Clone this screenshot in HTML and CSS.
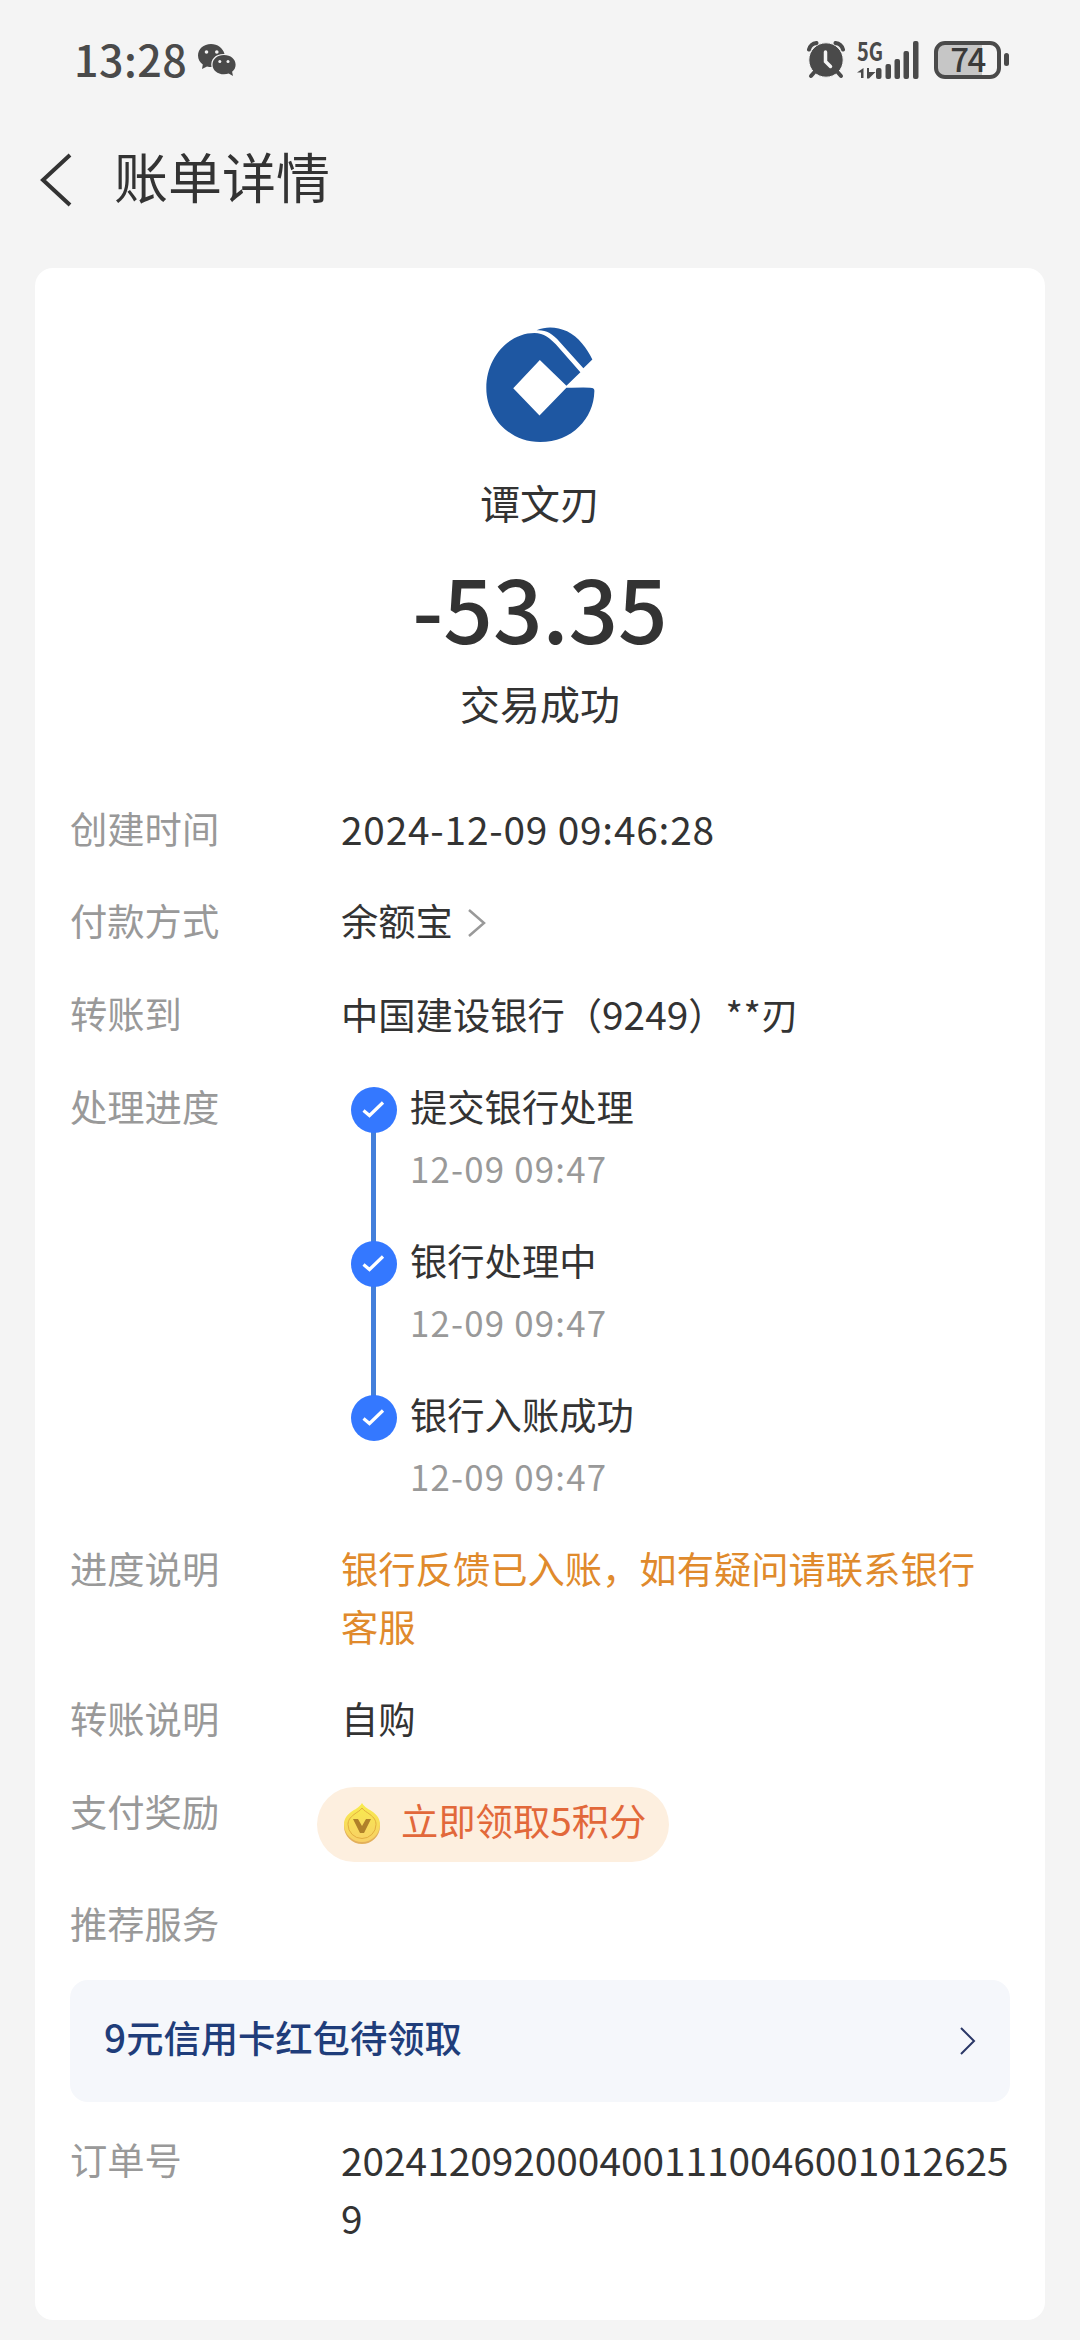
FILE: index.html
```html
<!DOCTYPE html>
<html lang="zh-CN">
<head>
    <meta charset="UTF-8">
    <meta name="viewport" content="width=device-width, initial-scale=1.0">
    <title>账单详情</title>
    <link rel="stylesheet" href="styles.css">
</head>
<body>
    <!-- Status bar -->
    <div class="status-bar">
        <span class="clock">13:28</span>
        <svg class="wechat" viewBox="0 0 38 33">
            <path d="M13 0C5.500 0 0 5 0 11.500c0 4 2 7 4.800 9L4 25l5-2.500c1.500.4 3 .5 4.500.5C12 15 18 9.500 26.500 10 25 4 19.500 0 13 0z"/>
            <path d="M26 11c-6.600 0-11.500 4.200-11.500 9.700S19.400 30.300 26 30.300c1.700 0 3.300-.3 4.700-.8L35 32l-.9-4.300c2.300-1.800 3.500-4.200 3.500-7C37.600 15.200 32.600 11 26 11z"/>
            <g class="eyes">
                <circle cx="8.500" cy="8" r="1.800"/><circle cx="18.800" cy="8" r="1.800"/>
                <circle cx="21.800" cy="17.500" r="1.500"/><circle cx="30" cy="17.500" r="1.500"/>
            </g>
        </svg>
        <div class="status-right">
            <svg class="alarm" viewBox="0 0 38 38">
                <circle cx="19" cy="19" r="17.200"/>
                <path class="bells" d="M2 8.500A9 9 0 0 1 9.500 2M36 8.500A9 9 0 0 0 28.500 2"/>
                <path class="legs" d="M7.500 31L4 35M30.500 31L34 35"/>
                <path class="hands" d="M18.500 11v9.500l5 5"/>
            </svg>
            <div class="signal">
                <span class="network">5G</span>
                <svg viewBox="0 0 62 38">
                    <path d="M0 31.500L6.500 27v10H4v-5.500zM10 27h2v4h6.500L12 37.500h-2z"/>
                    <rect x="19" y="27" width="5.500" height="11" rx="2"/>
                    <rect x="28.500" y="23" width="5.500" height="15" rx="2"/>
                    <rect x="37.500" y="18" width="5.500" height="20" rx="2"/>
                    <rect x="46.500" y="10" width="5.500" height="28" rx="2"/>
                    <rect x="56" y="0" width="5.500" height="38" rx="2"/>
                </svg>
            </div>
            <div class="battery">74</div>
        </div>
    </div>

    <!-- Title -->
    <header class="nav">
        <svg class="back" viewBox="0 0 32 54"><path d="M30 2L3 27l27 25"/></svg>
        <h1>账单详情</h1>
    </header>

    <main class="card">
        <section class="summary">
            <svg class="bank-logo" viewBox="250 75 340 356">
                <path d="M540 216L498 257 418 179 338 264 417 346 498 263Q572 260 578 264 583 266 582 274C580 355 515 426 419 426 325 426 257 350 257 264 257 165 330 98 402 98 430 98 450 115 466 132z"/>
                <path d="M408 90C440 76 470 80 500 93 535 110 560 145 576 178L549 204 478 125C455 98 435 88 408 90z"/>
            </svg>
            <p class="payee">谭文刃</p>
            <p class="amount">-53.35</p>
            <p class="state">交易成功</p>
        </section>

        <dl class="details">
            <div class="row">
                <dt>创建时间</dt>
                <dd class="num datetime">2024-12-09 09:46:28</dd>
            </div>
            <div class="row">
                <dt>付款方式</dt>
                <dd class="link">余额宝<svg class="arrow" viewBox="0 0 20 28"><path d="M2 1l15 13L2 27"/></svg></dd>
            </div>
            <div class="row">
                <dt>转账到</dt>
                <dd>中国建设银行（<span class="num">9249</span>）<span class="mask">**</span>刃</dd>
            </div>
            <div class="row">
                <dt>处理进度</dt>
                <dd>
                    <ol class="steps">
                        <li>
                            <svg class="check" viewBox="0 0 46 46"><circle cx="23" cy="23" r="23"/><path d="M12.500 23.500l6 5L32 15.500"/></svg>
                            <div>提交银行处理<span class="time">12-09 09:47</span></div>
                        </li>
                        <li>
                            <svg class="check" viewBox="0 0 46 46"><circle cx="23" cy="23" r="23"/><path d="M12.500 23.500l6 5L32 15.500"/></svg>
                            <div>银行处理中<span class="time">12-09 09:47</span></div>
                        </li>
                        <li>
                            <svg class="check" viewBox="0 0 46 46"><circle cx="23" cy="23" r="23"/><path d="M12.500 23.500l6 5L32 15.500"/></svg>
                            <div>银行入账成功<span class="time">12-09 09:47</span></div>
                        </li>
                    </ol>
                </dd>
            </div>
            <div class="row">
                <dt>进度说明</dt>
                <dd class="notice">银行反馈已入账，如有疑问请联系银行客服</dd>
            </div>
            <div class="row">
                <dt>转账说明</dt>
                <dd>自购</dd>
            </div>
            <div class="row reward-row">
                <dt>支付奖励</dt>
                <dd>
                    <a class="reward">
                        <svg class="coin" viewBox="0 0 38 42">
                            <defs>
                                <linearGradient id="gold" x1="0" y1="0" x2="0" y2="1">
                                    <stop offset="0" stop-color="#f8ec4c"/>
                                    <stop offset="1" stop-color="#f8d066"/>
                                </linearGradient>
                            </defs>
                            <path class="coin-edge" d="M19 2c3 5 7 6 11 9 4 3 7 7 7 12a18 18 0 0 1-36 0c0-5 3-9 7-12 4-3 8-4 11-9z"/>
                            <path fill="url(#gold)" d="M19 0c3 5 7 6 11 9 4 3 7 7 7 12a18 18 0 0 1-36 0c0-5 3-9 7-12 4-3 8-4 11-9z"/>
                            <path class="coin-ring" d="M19 5c2 3 5 4 8 6.500 4 3 6 6 6 10a14 14 0 0 1-28 0c0-4 2-7 6-10C14 9 17 8 19 5z"/>
                            <path class="coin-mark" d="M10 16h5l4 7 4-7h5l-7 14h-4z"/>
                        </svg>
                        <span>立即领取<span class="num">5</span>积分</span>
                    </a>
                </dd>
            </div>
        </dl>

        <section class="services">
            <h2>推荐服务</h2>
            <a class="promo">
                <span><span class="num">9</span>元信用卡红包待领取</span>
                <svg class="promo-arrow" viewBox="0 0 16 28"><path d="M1 1l13 13L1 27"/></svg>
            </a>
        </section>

        <dl class="details">
            <div class="row">
                <dt>订单号</dt>
                <dd class="num order">20241209200040011100460010126259</dd>
            </div>
        </dl>
    </main>
</body>
</html>
```
FILE: styles.css
```css
* {
    box-sizing: border-box;
    margin: 0;
    padding: 0;
}

body {
    width: 1080px;
    height: 2340px;
    background-color: #f4f4f4;
    color: #333;
    font-family: "Noto Sans CJK SC", sans-serif;
    font-size: 37.3px;
    line-height: 58px;
    overflow: hidden;
}

svg {
    display: block;
    flex: none;
}

/* Status bar */
.status-bar {
    display: flex;
    align-items: center;
    height: 120px;
    padding: 0 71px 0 74px;
    color: #4a4a4a;
}

.clock {
    width: 124px;
    padding-bottom: 5px;
    font-size: 43px;
    font-weight: 500;
    letter-spacing: 0.5px;
}

.wechat {
    width: 38px;
    height: 33px;
    fill: #4a4a4a;
}

.wechat .eyes {
    fill: #f4f4f4;
}

.status-right {
    display: flex;
    align-items: center;
    margin-left: auto;
}

.alarm {
    width: 38px;
    height: 38px;
    fill: #4a4a4a;
}

.alarm circle {
    stroke: #f4f4f4;
    stroke-width: 1;
}

.alarm path {
    fill: none;
    stroke: #4a4a4a;
    stroke-width: 4;
    stroke-linecap: round;
}

.alarm .hands {
    stroke: #f4f4f4;
    stroke-width: 3.5;
}

.signal {
    position: relative;
    width: 62px;
    height: 38px;
    margin-left: 12px;
}

.signal svg {
    width: 62px;
    height: 38px;
    fill: #4a4a4a;
}

.network {
    position: absolute;
    top: -2px;
    left: 0;
    font-size: 25px;
    font-weight: 700;
    line-height: 22px;
    transform: scaleX(0.8);
    transform-origin: left;
}

.battery {
    position: relative;
    width: 67px;
    height: 38px;
    margin: 0 8px 0 15px;
    border: 4px solid #4a4a4a;
    border-radius: 11px;
    background: linear-gradient(to right, #c6c6c6 74%, transparent 74%);
    font-size: 33px;
    font-weight: 500;
    line-height: 27px;
    text-align: center;
    letter-spacing: -1.5px;
    color: #3a3a3a;
}

.battery::after {
    content: "";
    position: absolute;
    top: 8px;
    right: -12px;
    width: 5px;
    height: 13px;
    border-radius: 3px;
    background-color: #4a4a4a;
}

/* Title */
.nav {
    display: flex;
    align-items: center;
    height: 120px;
    padding-left: 40px;
}

.nav .back {
    width: 32px;
    height: 54px;
    margin-right: 42px;
    fill: none;
    stroke: #333;
    stroke-width: 4;
}

.nav h1 {
    padding-bottom: 8px;
    font-size: 54px;
    font-weight: 400;
}

.card {
    width: 1010px;
    height: 2052px;
    margin: 28px auto 0;
    padding: 57px 35px 0;
    border-radius: 18px;
    background-color: #fff;
}

/* Payee, amount, state */
.summary {
    display: flex;
    flex-direction: column;
    align-items: center;
    height: 474px;
}

.bank-logo {
    width: 113px;
    height: 119px;
    fill: #1e57a2;
}

.payee,
.state {
    font-size: 40px;
}

.payee {
    margin-top: 29px;
}

.amount {
    margin-top: 25px;
    font-size: 87px;
    font-weight: 500;
    line-height: 100px;
}

.state {
    margin-top: 18px;
}

/* Detail rows */
.details {
    display: flex;
    flex-direction: column;
    gap: 34.3px;
}

.row {
    display: flex;
}

dt {
    flex: none;
    width: 271px;
}

dt,
.services h2,
.time {
    color: #999;
}

dd {
    flex: 1;
    min-width: 0;
}

.num {
    font-size: 38.8px;
}

.datetime {
    letter-spacing: 0.8px;
}

.mask {
    letter-spacing: 0.5px;
}

.link {
    display: flex;
    align-items: center;
}

.arrow {
    width: 20px;
    height: 28px;
    margin: 5px 0 0 14px;
    fill: none;
    stroke: #999;
    stroke-width: 2.5;
}

/* Progress timeline */
.steps {
    list-style: none;
}

.steps li {
    position: relative;
    display: flex;
    height: 154px;
    padding-left: 10px;
}

.steps li:last-child {
    height: 120px;
}

.steps li:not(:last-child)::before {
    content: "";
    position: absolute;
    top: 52px;
    left: 30px;
    width: 5px;
    height: 114px;
    background-color: #437fdb;
}

.check {
    position: relative;
    width: 46px;
    height: 46px;
    margin: 10px 13px 0 0;
    fill: #3478ff;
}

.check path {
    fill: none;
    stroke: #fff;
    stroke-width: 3.2;
}

.time {
    display: block;
    margin-top: 4px;
    font-size: 34.8px;
    letter-spacing: 1.2px;
}

.notice {
    color: #e08a2c;
}

/* Points reward */
.reward-row {
    height: 78px;
}

.reward {
    display: flex;
    align-items: center;
    width: 352px;
    height: 75px;
    margin: 5px 0 0 -24px;
    padding-left: 26px;
    border-radius: 38px;
    background-color: #fdefdf;
    color: #e2683a;
    white-space: nowrap;
}

.reward > span,
.promo > span {
    padding-bottom: 9px;
}

.coin {
    width: 38px;
    height: 42px;
    margin-right: 20px;
}

.coin-edge {
    fill: #e3b05a;
}

.coin-ring {
    fill: none;
    stroke: #e3ae3f;
    stroke-width: 1;
}

.coin-mark {
    fill: #b0812a;
}

/* Recommended services */
.services {
    margin: 34px 0 28px;
}

.services h2 {
    font-size: inherit;
    font-weight: 400;
}

.promo {
    display: flex;
    align-items: center;
    justify-content: space-between;
    height: 122px;
    margin-top: 28px;
    padding: 0 34px;
    border-radius: 18px;
    background-color: #f5f7fb;
    color: #1f3d7a;
    font-weight: 500;
}

.promo-arrow {
    width: 16px;
    height: 28px;
    fill: none;
    stroke: #2a3766;
    stroke-width: 2;
}

.order {
    word-break: break-all;
}
```
